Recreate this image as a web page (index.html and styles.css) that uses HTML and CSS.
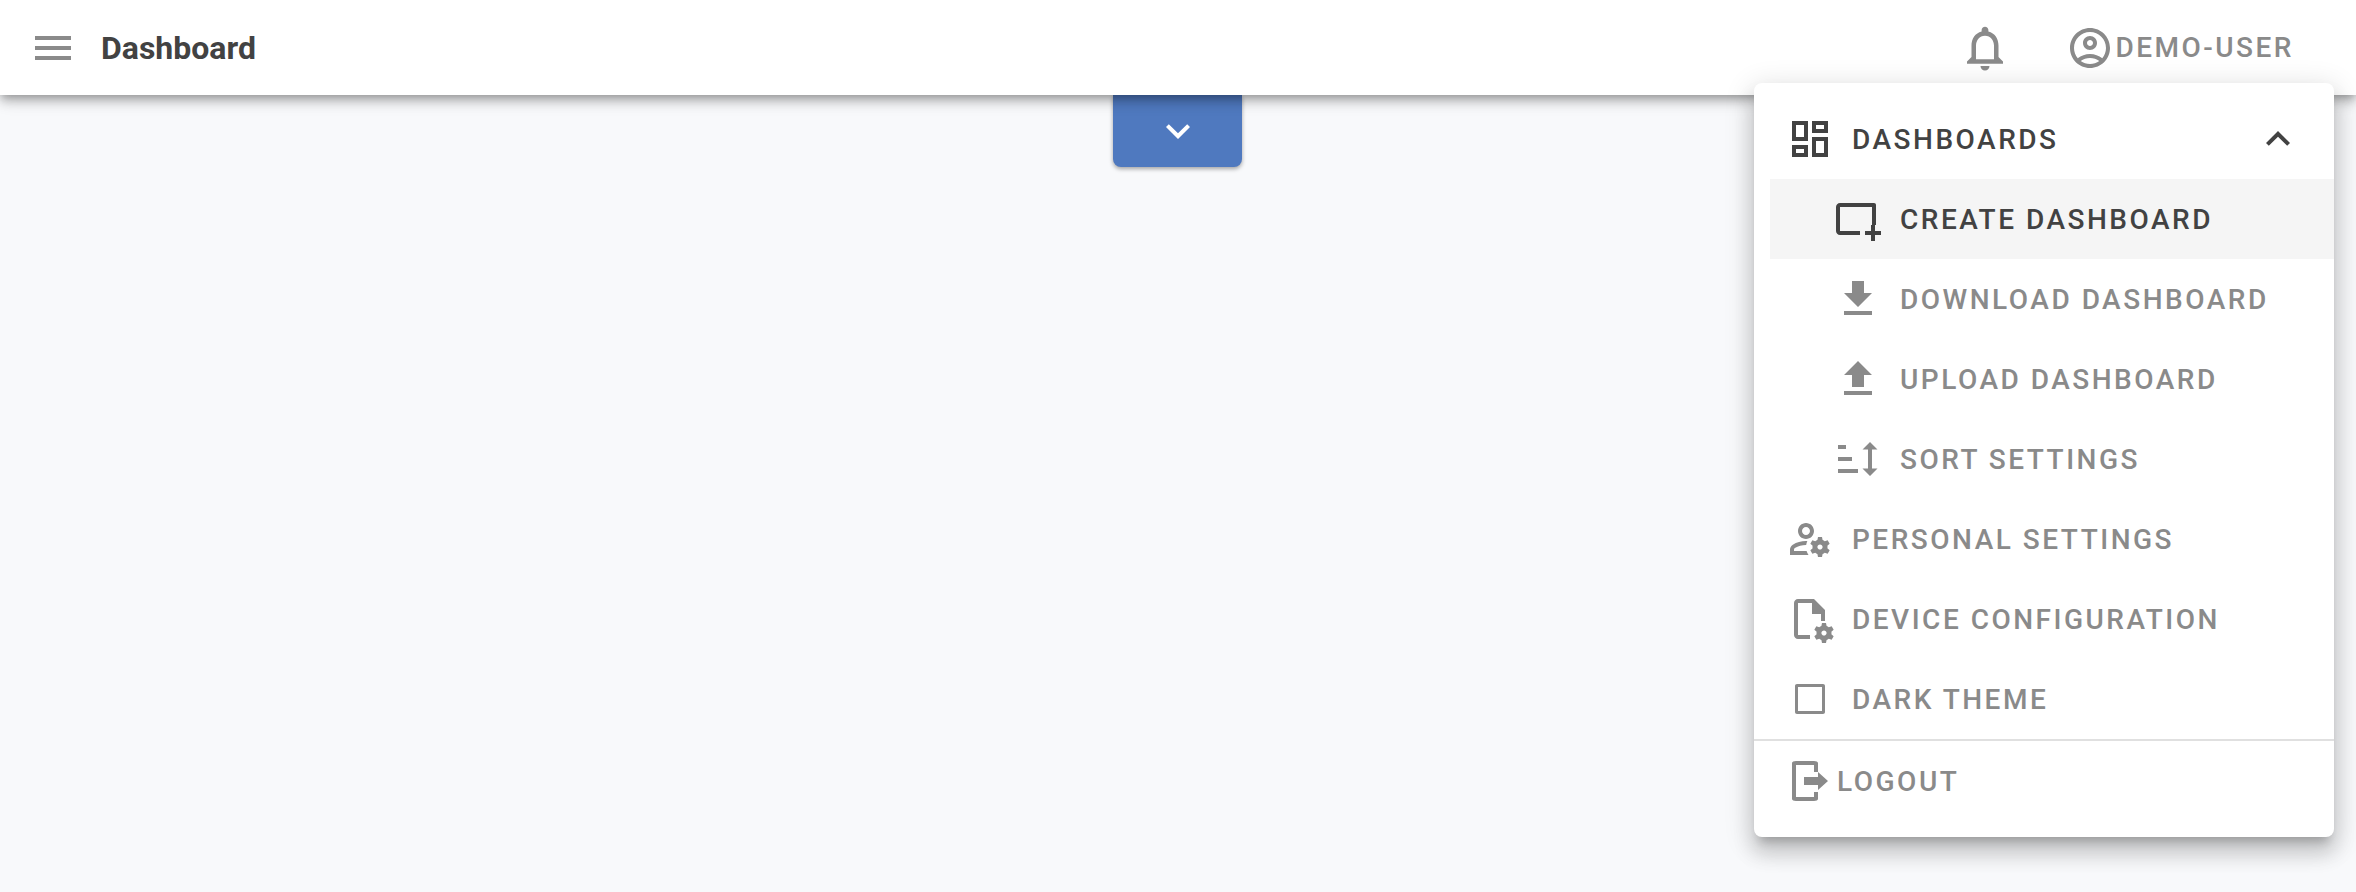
FILE: index.html
```html
<!DOCTYPE html>
<html lang="en">
<head>
  <title>Dashboard</title>
  <meta charset="UTF-8">
  <meta name="viewport" content="width=device-width, initial-scale=1.0">
  <link rel="stylesheet" href="styles.css">
</head>
<body>
  <header class="topbar">
    <svg class="icon topbar__menu" viewBox="0 0 24 24"><path d="M3 18h18v-2H3v2zm0-5h18v-2H3v2zm0-7v2h18V6H3z"/></svg>
    <h1 class="topbar__title">Dashboard</h1>
    <div class="topbar__right">
      <svg class="icon topbar__bell" viewBox="0 0 24 24"><path d="M12 22c1.1 0 2-.9 2-2h-4c0 1.1.9 2 2 2zm6-6v-5c0-3.07-1.63-5.64-4.5-6.32V4c0-.83-.67-1.5-1.5-1.5s-1.5.67-1.5 1.5v.68C7.64 5.36 6 7.92 6 11v5l-2 2v1h16v-1l-2-2zm-2 1H8v-6c0-2.48 1.51-4.5 4-4.5s4 2.02 4 4.5v6z"/></svg>
      <div class="topbar__user">
        <svg class="icon" viewBox="0 0 24 24"><path d="M12 2C6.48 2 2 6.48 2 12s4.48 10 10 10 10-4.48 10-10S17.52 2 12 2zM7.35 18.5C8.66 17.56 10.26 17 12 17s3.34.56 4.65 1.5c-1.31.94-2.91 1.5-4.65 1.5s-3.34-.56-4.65-1.5zm10.79-1.38C16.45 15.8 14.32 15 12 15s-4.45.8-6.14 2.12C4.7 15.73 4 13.95 4 12c0-4.42 3.58-8 8-8s8 3.58 8 8c0 1.95-.7 3.73-1.86 5.12zM12 6c-1.93 0-3.5 1.57-3.5 3.5S10.07 13 12 13s3.5-1.57 3.5-3.5S13.93 6 12 6zm0 5c-.83 0-1.5-.67-1.5-1.5S11.17 8 12 8s1.5.67 1.5 1.5S12.83 11 12 11z"/></svg>
        <span>DEMO-USER</span>
      </div>
    </div>
  </header>

  <div class="toolbar-toggle">
    <svg class="icon" viewBox="0 0 24 24"><path d="M16.59 8.59L12 13.17 7.41 8.59 6 10l6 6 6-6z"/></svg>
  </div>

  <nav class="menu">
    <div class="menu__item menu__item--dark">
      <svg class="icon" viewBox="0 0 24 24"><path d="M19 5v2h-4V5h4M9 5v6H5V5h4m10 8v6h-4v-6h4M9 17v2H5v-2h4M21 3h-8v6h8V3zM11 3H3v10h8V3zm10 8h-8v10h8V11zm-10 4H3v6h8v-6z"/></svg>
      <span class="menu__label">DASHBOARDS</span>
      <svg class="icon menu__chevron" viewBox="0 0 24 24"><path d="M12 8l-6 6 1.41 1.41L12 10.83l4.59 4.58L18 14z"/></svg>
    </div>
    <div class="menu__item menu__item--sub menu__item--active">
      <svg class="icon" viewBox="0 0 24 24"><path d="M3 4h17c.6 0 1 .4 1 1v10h-2V6H3v12h10v2H3c-1.1 0-2-.9-2-2V6c0-1.1.9-2 2-2z"/><path d="M18.5 15h2v3h3v2h-3v3h-2v-3h-3v-2h3z"/></svg>
      <span class="menu__label">CREATE DASHBOARD</span>
    </div>
    <div class="menu__item menu__item--sub">
      <svg class="icon" viewBox="0 0 24 24"><path d="M19 9h-4V3H9v6H5l7 7 7-7zM5 18v2h14v-2H5z"/></svg>
      <span class="menu__label">DOWNLOAD DASHBOARD</span>
    </div>
    <div class="menu__item menu__item--sub">
      <svg class="icon" viewBox="0 0 24 24"><path d="M9 16h6v-6h4l-7-7-7 7h4v6zm-4 2h14v2H5v-2z"/></svg>
      <span class="menu__label">UPLOAD DASHBOARD</span>
    </div>
    <div class="menu__item menu__item--sub">
      <svg class="icon" viewBox="0 0 24 24"><path d="M2 5h4v2H2zM2 11h7v2H2zM2 17h10v2H2z"/><path d="M18 3.5l3.75 3.75H19v9.5h2.75L18 20.5l-3.75-3.75H17V7.25h-2.75z"/></svg>
      <span class="menu__label">SORT SETTINGS</span>
    </div>
    <div class="menu__item">
      <svg class="icon" viewBox="0 0 24 24"><path d="M4 18v-.65c0-.34.16-.66.41-.81C6.1 15.53 8.03 15 10 15c.03 0 .05 0 .08.01.1-.7.3-1.37.59-1.98-.22-.02-.44-.03-.67-.03-2.42 0-4.68.67-6.61 1.82-.88.52-1.39 1.5-1.39 2.53V20h9.26c-.42-.6-.75-1.28-.97-2H4zM10 12c2.21 0 4-1.79 4-4s-1.79-4-4-4-4 1.79-4 4 1.79 4 4 4zm0-6c1.1 0 2 .9 2 2s-.9 2-2 2-2-.9-2-2 .9-2 2-2zM20.75 16c0-.22-.03-.42-.06-.63l1.14-1.01-1-1.73-1.45.49c-.32-.27-.68-.48-1.08-.63L18 11h-2l-.3 1.49c-.4.15-.76.36-1.08.63l-1.45-.49-1 1.73 1.14 1.01c-.03.21-.06.41-.06.63s.03.42.06.63l-1.14 1.01 1 1.73 1.45-.49c.32.27.68.48 1.08.63L16 21h2l.3-1.49c.4-.15.76-.36 1.08-.63l1.45.49 1-1.73-1.14-1.01c.03-.21.06-.41.06-.63zM17 17.3c-.7 0-1.3-.6-1.3-1.3s.6-1.3 1.3-1.3 1.3.6 1.3 1.3-.6 1.3-1.3 1.3z"/></svg>
      <span class="menu__label">PERSONAL SETTINGS</span>
    </div>
    <div class="menu__item">
      <svg class="icon" viewBox="0 0 24 24"><path d="M6 2h8l5.5 5.5V13h-2V9.5H13V4H6v16h6v2H6c-1.1 0-2-.9-2-2V4c0-1.1.9-2 2-2z"/><path d="M22.75 19c0-.22-.03-.42-.06-.63l1.14-1.01-1-1.73-1.45.49c-.32-.27-.68-.48-1.08-.63L20 14h-2l-.3 1.49c-.4.15-.76.36-1.08.63l-1.45-.49-1 1.73 1.14 1.01c-.03.21-.06.41-.06.63s.03.42.06.63l-1.14 1.01 1 1.73 1.45-.49c.32.27.68.48 1.08.63L18 24h2l.3-1.49c.4-.15.76-.36 1.08-.63l1.45.49 1-1.73-1.14-1.01c.03-.21.06-.41.06-.63zM19 20.3c-.7 0-1.3-.6-1.3-1.3s.6-1.3 1.3-1.3 1.3.6 1.3 1.3-.6 1.3-1.3 1.3z"/></svg>
      <span class="menu__label">DEVICE CONFIGURATION</span>
    </div>
    <div class="menu__item">
      <svg class="icon" viewBox="0 0 24 24"><path d="M18 6v12H6V6h12m.5-1.5h-13c-.6 0-1 .4-1 1v13c0 .6.4 1 1 1h13c.6 0 1-.4 1-1v-13c0-.6-.4-1-1-1z"/></svg>
      <span class="menu__label">DARK THEME</span>
    </div>
    <div class="menu__divider"></div>
    <div class="menu__item menu__item--logout">
      <svg class="icon" viewBox="0 0 24 24"><path d="M5 2h9c1.1 0 2 .4 2 1v4.5h-2V4H5v16h9v-2.5h2V21c0 .6-.9 1-2 1H5c-1.1 0-2-.4-2-1V3c0-.6.9-1 2-1z"/><path d="M16 7.5l5 4.5-5 4.5V14H9v-4h7z"/></svg>
      <span class="menu__label">LOGOUT</span>
    </div>
  </nav>
</body>
</html>
```

FILE: styles.css
```css
html {
  font-family: "Roboto", "Liberation Sans", sans-serif;
}

body {
  margin: 0;
  height: 892px;
  overflow: hidden;
  background-color: #f8f9fb;
  color: #8a8a8a;
}

.icon {
  width: 48px;
  height: 48px;
  flex: none;
  fill: currentColor;
}

.topbar {
  position: relative;
  z-index: 2;
  display: flex;
  align-items: center;
  height: 95px;
  padding: 0 62px 0 29px;
  background: #fff;
  box-shadow: 0 4px 8px -2px rgba(0, 0, 0, 0.25), 0 8px 10px 0 rgba(0, 0, 0, 0.14), 0 2px 20px 0 rgba(0, 0, 0, 0.12);
}

.topbar__title {
  margin: 0 0 0 24px;
  color: #424242;
  font-size: 32px;
  font-weight: 700;
}

.topbar__right {
  display: flex;
  align-items: center;
  gap: 54px;
  margin-left: auto;
}

.topbar__bell {
  width: 54px;
  height: 54px;
}

.topbar__user {
  display: flex;
  align-items: center;
  gap: 1px;
  font-size: 28px;
  font-weight: 500;
  letter-spacing: 2.5px;
}

.toolbar-toggle {
  display: flex;
  justify-content: center;
  align-items: center;
  width: 129px;
  height: 72px;
  margin-left: 1113px;
  background-color: #4f79bf;
  color: #fff;
  border-radius: 0 0 8px 8px;
  box-shadow: 0 2px 4px rgba(0, 0, 0, 0.35);
}

.menu {
  position: absolute;
  z-index: 3;
  top: 83px;
  right: 22px;
  width: 580px;
  padding: 16px 0;
  background: #fff;
  border-radius: 8px;
  box-shadow: 0 10px 10px -6px rgba(0, 0, 0, 0.2), 0 16px 20px 2px rgba(0, 0, 0, 0.14), 0 6px 28px 4px rgba(0, 0, 0, 0.12);
}

.menu__item {
  display: flex;
  align-items: center;
  height: 80px;
  padding: 0 32px;
}

.menu__item--dark {
  color: #424242;
}

.menu__item--sub {
  margin-left: 16px;
  padding-left: 64px;
}

.menu__item--active {
  background: #f5f5f5;
  color: #424242;
}

.menu__label {
  margin-left: 18px;
  padding-top: 1px;
  font-size: 28px;
  font-weight: 500;
  letter-spacing: 2.5px;
}

.menu__item--logout .menu__label {
  margin-left: 3px;
}

.menu__chevron {
  margin-left: auto;
}

.menu__divider {
  height: 2px;
  background: #e0e0e0;
}
```
